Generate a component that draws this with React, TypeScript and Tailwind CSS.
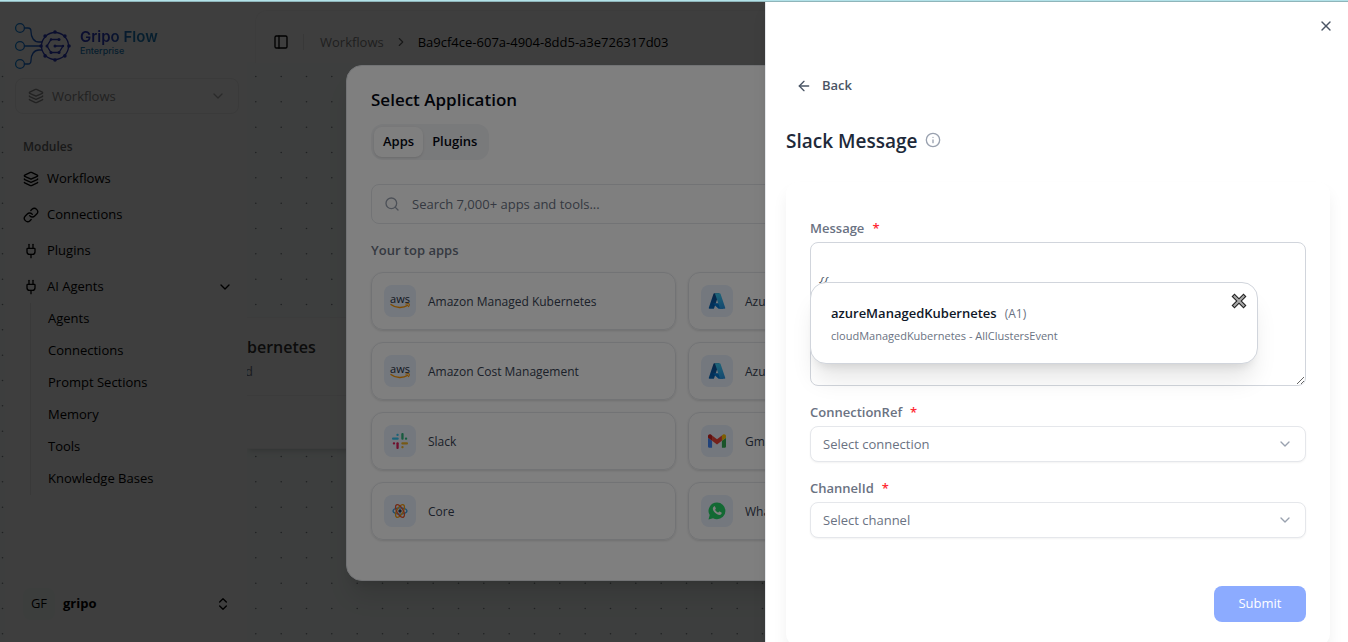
import React from 'react';
import {
  ArrowLeft,
  ChevronDown,
  ChevronRight,
  ChevronsUpDown,
  Info,
  Layers,
  Link,
  PanelLeft,
  Plug,
  Search,
  X,
} from 'lucide-react';

function BrandMark() {
  const ring = [0, 45, 90, 135, 180, 225, 270, 315].map((deg) => {
    const a = (deg * Math.PI) / 180;
    return [41 + 14 * Math.cos(a), 24 + 14 * Math.sin(a)];
  });
  return (
    <svg viewBox="0 0 58 48" className="h-12 w-[58px]" fill="none" strokeWidth="1.3" aria-hidden="true">
      <defs>
        <linearGradient id="brand" gradientUnits="userSpaceOnUse" x1="0" y1="0" x2="36" y2="0">
          <stop offset="0" stopColor="#0a8ae0" />
          <stop offset="1" stopColor="#2a38b8" />
        </linearGradient>
      </defs>
      <g stroke="url(#brand)">
        <circle cx="6" cy="6" r="4.400" />
        <circle cx="6" cy="24" r="4.400" />
        <circle cx="6" cy="42" r="4.400" />
        <path d="M10.500 6h3.500c2 0 3 1 3 3.500c0 6 3 10.500 8 10.500h3M10.500 24.010h16M10.500 42h3.500c2 0 3-1 3-3.500c0-6 3-10.500 8-10.500h3" />
      </g>
      <g stroke="#2a38b8">
        <circle cx="41" cy="24" r="13.500" />
        <path d="M45 17.500h-8l-4 6.500l4 6.500h8l4-6.500h-8" />
      </g>
      <g fill="#2a38b8">
        {ring.map(([x, y], i) => (
          <circle key={i} cx={x} cy={y} r="1.800" />
        ))}
        <circle cx="45" cy="17.500" r="1.500" />
        <circle cx="37" cy="17.500" r="1.200" />
        <circle cx="33" cy="24" r="1.500" />
        <circle cx="37" cy="30.500" r="1.500" />
        <circle cx="45" cy="30.500" r="1.500" />
        <circle cx="41" cy="24" r="1.500" />
        <circle cx="49" cy="24" r="1.200" />
      </g>
    </svg>
  );
}

function AwsIcon() {
  return (
    <span className="flex flex-col items-center">
      <span className="text-[11px] leading-[9px] font-medium text-[#252f3e]">aws</span>
      <svg viewBox="0 0 20 6" className="h-[6px] w-5" fill="none" stroke="#ff9900" strokeWidth="1.400" aria-hidden="true">
        <path d="M0.500 1.200c5.500 4.300 12.500 4.300 17.500 1" />
        <path d="M15.500 1.200c2-.7 3.500-.5 3.700-.1c.2.5-.2 1.900-1 2.900" strokeWidth="1.100" />
      </svg>
    </span>
  );
}

function AzureIcon() {
  return (
    <svg viewBox="0 0 96 96" className="size-[18px]" aria-hidden="true">
      <defs>
        <linearGradient id="azLeft" x1="0.600" y1="0" x2="0.200" y2="1">
          <stop offset="0" stopColor="#114a8b" />
          <stop offset="1" stopColor="#0669bc" />
        </linearGradient>
        <linearGradient id="azRight" x1="0.300" y1="0" x2="0.700" y2="1">
          <stop offset="0" stopColor="#3ccbf4" />
          <stop offset="1" stopColor="#2892df" />
        </linearGradient>
      </defs>
      <path fill="url(#azLeft)" d="M33.300 6.500h26.100L32.400 86.600a4.200 4.200 0 0 1-3.900 2.900H8.200a4.200 4.200 0 0 1-3.900-5.500L29.400 9.400a4.200 4.200 0 0 1 3.900-2.900z" />
      <path fill="#0078d4" d="M71.200 60.300H29.900a1.900 1.900 0 0 0-1.300 3.300l26.500 24.800a4.200 4.200 0 0 0 2.900 1.100h23.400z" />
      <path fill="url(#azRight)" d="M66.600 9.400a4.200 4.200 0 0 0-3.900-2.900H33.600a4.200 4.200 0 0 1 3.900 2.900l25.200 74.700a4.200 4.200 0 0 1-4 5.500h29.100a4.200 4.200 0 0 0 4-5.500z" />
    </svg>
  );
}

function SlackIcon() {
  return (
    <svg viewBox="0 0 16 16" className="size-4" aria-hidden="true">
      <g fill="#36c5f0">
        <rect x="0" y="4.500" width="6.700" height="2.200" rx="1" />
        <rect x="4.400" y="0.800" width="2.300" height="2.300" rx="1" />
      </g>
      <g fill="#2eb67d">
        <rect x="9.300" y="0" width="2.300" height="6.700" rx="1" />
        <rect x="12.900" y="4.400" width="2.300" height="2.300" rx="1" />
      </g>
      <g fill="#ecb22e">
        <rect x="9.300" y="9.300" width="6.700" height="2.300" rx="1" />
        <rect x="9.300" y="12.900" width="2.300" height="2.300" rx="1" />
      </g>
      <g fill="#e01e5a">
        <rect x="4.400" y="9.300" width="2.300" height="6.700" rx="1" />
        <rect x="0.800" y="9.300" width="2.300" height="2.300" rx="1" />
      </g>
    </svg>
  );
}

function GmailIcon() {
  return (
    <svg viewBox="52 42 88 66" className="h-[14px] w-[18px]" aria-hidden="true">
      <path fill="#4285f4" d="M58 108h14V74L52 59v43c0 3.320 2.690 6 6 6" />
      <path fill="#34a853" d="M120 108h14c3.320 0 6-2.690 6-6V59l-20 15" />
      <path fill="#fbbc04" d="M120 48v26l20-15v-8c0-7.420-8.470-11.650-14.400-7.200" />
      <path fill="#ea4335" d="M72 74V48l24 18 24-18v26L96 92" />
      <path fill="#c5221f" d="M52 51v8l20 15V48l-5.600-4.200c-5.940-4.450-14.400-.22-14.400 7.200" />
    </svg>
  );
}

function CoreIcon() {
  return (
    <svg viewBox="0 0 16 16" className="size-4" fill="none" strokeWidth="1.300" aria-hidden="true">
      <ellipse cx="8" cy="8" rx="7" ry="3.200" stroke="#3498db" />
      <ellipse cx="8" cy="8" rx="7" ry="3.200" stroke="#f39c12" transform="rotate(120 8 8)" />
      <ellipse cx="8" cy="8" rx="7" ry="3.200" stroke="#e8562a" transform="rotate(60 8 8)" />
      <circle cx="8" cy="8" r="1.700" fill="#2c3e50" />
    </svg>
  );
}

function WhatsAppIcon() {
  return (
    <svg viewBox="0 0 18 18" className="size-[18px]" aria-hidden="true">
      <path fill="#25d366" d="M9 0.500a8.400 8.400 0 0 1 0 16.800a8.400 8.400 0 0 1-4-1L0.500 17.500l1.200-4.400A8.400 8.400 0 0 1 9 0.500z" />
      <path
        fill="#fff"
        d="M5.900 4.600c.4-.4 1-.3 1.200.1l.7 1.600c.1.300 0 .5-.2.800l-.5.600c.7 1.300 1.800 2.300 3.200 2.900l.8-.9c.2-.2.400-.2.600-.1l1.700.8c.3.100.4.300.3.700c-.1 1.200-1.100 1.900-2.200 1.900c-2.900 0-6.700-3.600-6.700-6.400c0-.8.500-1.500 1.100-2z"
      />
    </svg>
  );
}

const modules = [
  { label: 'Workflows', Icon: Layers },
  { label: 'Connections', Icon: Link },
  { label: 'Plugins', Icon: Plug },
];

const agentPages = ['Agents', 'Connections', 'Prompt Sections', 'Memory', 'Tools', 'Knowledge Bases'];

const apps = [
  { name: 'Amazon Managed Kubernetes', Icon: AwsIcon },
  { name: 'Azure Managed Kubernetes', Icon: AzureIcon },
  { name: 'Amazon Cost Management', Icon: AwsIcon },
  { name: 'Azure Cost Management', Icon: AzureIcon },
  { name: 'Slack', Icon: SlackIcon },
  { name: 'Gmail', Icon: GmailIcon },
  { name: 'Core', Icon: CoreIcon },
  { name: 'WhatsApp', Icon: WhatsAppIcon },
];

function Canvas() {
  return (
    <div className="absolute inset-x-0 top-[60px] bottom-0 overflow-hidden bg-[#f4fbf9]">
      <svg className="size-full" aria-hidden="true">
        <defs>
          <pattern id="dots" width="76" height="76" patternUnits="userSpaceOnUse">
            {[2.500, 27.800, 53.200].map((x) =>
              [14.500, 39.800, 65.200].map((y) => <circle key={`${x}-${y}`} cx={x} cy={y} r="0.800" fill="#81848a" />),
            )}
          </pattern>
        </defs>
        <rect width="100%" height="100%" fill="url(#dots)" />
      </svg>
      <div className="absolute top-[255px] left-[247px] h-[132px] w-60 rounded-r-lg border border-l-0 border-[#f0f0f0] bg-[#f9faf9] shadow-md">
        <div className="h-[78px] border-b border-[#eeeeee] pt-[15px]">
          <p className="text-base leading-7 font-semibold text-[#333]">bernetes</p>
          <p className="-ml-0.5 text-[13px] leading-5 text-gray-500">d</p>
        </div>
      </div>
    </div>
  );
}

function Sidebar() {
  return (
    <aside className="relative ml-[5px] flex w-[242px] shrink-0 flex-col bg-[#f9f9f9] pr-2 pl-2.5">
      <div className="-ml-px flex h-[76px] items-center gap-2 pt-3">
        <BrandMark />
        <div className="pb-1.5">
          <p className="bg-linear-to-r from-[#2b38bc] from-35% to-[#1a78b8] to-65% bg-clip-text font-[Inter] text-[15px] leading-4 font-semibold text-transparent">
            Gripo Flow
          </p>
          <p className="font-[Inter] text-[9px] leading-3 font-medium text-[#1a78b8]">Enterprise</p>
        </div>
      </div>
      <button className="flex h-9 shrink-0 items-center gap-2 rounded-lg border border-[#e8e8e8] px-3 text-[13px] text-[#888]">
        <Layers className="size-4" />
        <span className="flex-1 pt-px text-left">Workflows</span>
        <ChevronDown className="size-4 opacity-70" />
      </button>
      <nav className="pt-[21px] pl-2">
        <h2 className="h-[26px] text-xs leading-6 font-semibold text-[#666]">Modules</h2>
        <ul className="text-[13px] text-black">
          {modules.map(({ label, Icon }) => (
            <li key={label}>
              <a href="#" className="flex h-9 items-center gap-2">
                <Icon className="size-4" />
                {label}
              </a>
            </li>
          ))}
          <li>
            <button className="flex h-9 w-full items-center gap-2 pr-1.5">
              <Plug className="size-4" />
              <span className="flex-1 text-left">AI Agents</span>
              <ChevronDown className="size-4" />
            </button>
            <ul className="-mt-0.5 ml-[7px] border-l border-[#e4e4e4] pl-[17px]">
              {agentPages.map((page) => (
                <li key={page}>
                  <a href="#" className="flex h-8 items-center">
                    {page}
                  </a>
                </li>
              ))}
            </ul>
          </li>
        </ul>
      </nav>
      <button className="mt-auto mb-[22px] ml-2 flex h-8 items-center gap-2 pr-2 text-[13px] text-black">
        <span className="flex size-8 items-center justify-center rounded-lg bg-[#f1f9f6]">GF</span>
        <span className="flex-1 text-left font-bold">gripo</span>
        <ChevronsUpDown className="size-4" />
      </button>
    </aside>
  );
}

function Header() {
  return (
    <header className="relative ml-2 h-[61px] flex-1 pt-2">
      <div className="flex h-[53px] items-center rounded-tl-xl border-t border-l border-[#f2f2f2] bg-[#fbfbfb] pt-2.5 pl-[17px]">
        <button aria-label="Toggle sidebar">
          <PanelLeft className="size-4" />
        </button>
        <nav aria-label="Breadcrumb" className="ml-3.5 flex items-center border-l border-[#e0e0e0] pl-4 text-[13px] leading-4">
          <a href="#" className="text-[#808080]">
            Workflows
          </a>
          <ChevronRight className="mx-2.5 size-3.5 text-[#606060]" />
          <span className="text-black">Ba9cf4ce-607a-4904-8dd5-a3e726317d03</span>
        </nav>
      </div>
    </header>
  );
}

function AppPicker() {
  return (
    <section className="w-2xl rounded-2xl border border-gray-200 bg-white px-6 pt-5 pb-10 shadow-xl">
      <h2 className="text-[17px] leading-7 font-semibold text-gray-950">Select Application</h2>
      <div className="mt-2.5 inline-flex h-9 items-center rounded-xl bg-gray-100 p-[3px] text-[13px] font-semibold text-gray-950">
        <button className="h-full rounded-lg bg-white px-[9px] shadow-sm">Apps</button>
        <button className="h-full rounded-lg px-[9px]">Plugins</button>
      </div>
      <div className="mt-6 flex h-10 items-center gap-3 rounded-lg border border-gray-200 px-3">
        <Search className="size-4 text-gray-400" />
        <input
          aria-label="Search apps and tools"
          placeholder="Search 7,000+ apps and tools..."
          className="flex-1 pt-0.5 text-[13px] outline-none placeholder:text-gray-500"
        />
      </div>
      <h3 className="mt-4 text-[13px] leading-5 font-semibold text-gray-500">Your top apps</h3>
      <div className="mt-3 grid grid-cols-2 gap-3">
        {apps.map(({ name, Icon }) => (
          <button key={name} className="flex h-[58px] items-center gap-3 rounded-xl border border-gray-200 px-3 shadow-sm">
            <span className="flex size-8 items-center justify-center rounded-lg bg-[#e8f0fc]">
              <Icon />
            </span>
            <span className="pt-0.5 text-xs font-medium text-gray-700">{name}</span>
          </button>
        ))}
      </div>
    </section>
  );
}

function FieldLabel({ id, children }: { id: string; children: React.ReactNode }) {
  return (
    <label htmlFor={id} className="block text-[13px] leading-5 font-semibold text-gray-500">
      {children}
      <span className="ml-2 text-[#ff2a35]">*</span>
    </label>
  );
}

function SelectField({ id, label, placeholder }: { id: string; label: string; placeholder: string }) {
  return (
    <div className="mt-4">
      <FieldLabel id={id}>{label}</FieldLabel>
      <div className="relative mt-1">
        <select
          id={id}
          className="block h-9 w-full appearance-none rounded-lg border border-gray-200 bg-white px-3 pt-0.5 text-[13px] text-gray-500 shadow-xs"
        >
          <option>{placeholder}</option>
        </select>
        <ChevronDown className="pointer-events-none absolute top-2.5 right-[13px] size-4 text-gray-400" />
      </div>
    </div>
  );
}

function SuggestionPopup() {
  return (
    <div className="absolute top-10 left-0 h-[82px] w-[448px] rounded-2xl border border-gray-300 bg-white px-5 pt-5 shadow-xl">
      <p className="flex items-baseline gap-2 text-[13px] leading-5 font-semibold text-gray-900">
        azureManagedKubernetes
        <span className="text-xs font-normal text-gray-500">(A1)</span>
      </p>
      <p className="mt-1 text-[11px] leading-[18px] text-gray-500">cloudManagedKubernetes - AllClustersEvent</p>
      <button aria-label="Close suggestions" className="absolute top-2.5 right-2.5">
        <svg viewBox="0 0 16 16" className="size-4" strokeLinecap="square" aria-hidden="true">
          <path d="M3.500 3.500l9 9M12.500 3.500l-9 9" stroke="#222" strokeWidth="4.200" />
          <path d="M3.500 3.500l9 9M12.500 3.500l-9 9" stroke="#aaa" strokeWidth="2" />
        </svg>
      </button>
    </div>
  );
}

function MessageDrawer() {
  return (
    <section className="absolute inset-y-0 right-0 w-[583px] max-w-full overflow-hidden border-l border-gray-200 bg-white px-5 shadow-lg">
      <div className="-mr-1.5 flex h-12 items-center justify-end">
        <button aria-label="Close" className="text-gray-600">
          <X className="size-4" />
        </button>
      </div>
      <button className="mt-6 ml-2.5 flex h-6 items-center gap-2.5 text-[13px] font-semibold text-gray-600">
        <ArrowLeft className="size-4" />
        Back
      </button>
      <div className="mt-7 flex h-7 items-center gap-2">
        <h1 className="pt-0.5 text-[19px] font-semibold text-gray-800">Slack Message</h1>
        <Info className="size-4 text-gray-400" />
      </div>
      <form className="mt-7 -mr-0.5 rounded-xl bg-white px-6 pt-9 pb-6 shadow-[0_10px_15px_rgba(0,0,0,0.06)]">
        <FieldLabel id="message">Message</FieldLabel>
        <div className="relative mt-1">
          <textarea
            id="message"
            defaultValue={'\n{{'}
            className="block h-36 w-full rounded-lg border border-gray-300 px-2 pt-2 text-[13px] leading-5 text-gray-600 italic"
          />
          <SuggestionPopup />
        </div>
        <SelectField id="connection" label="ConnectionRef" placeholder="Select connection" />
        <SelectField id="channel" label="ChannelId" placeholder="Select channel" />
        <div className="mt-12 flex justify-end">
          <button type="button" className="h-9 min-w-[92px] rounded-lg bg-[#8cabff] px-6 text-[13px] font-medium text-white">
            Submit
          </button>
        </div>
      </form>
    </section>
  );
}

export default function App() {
  return (
    <div className="flex h-screen flex-col font-['Open_Sans',sans-serif]">
      <div className="h-0.5 border-b border-[#8fb5ba] bg-[#b2e2e9]" />
      <div className="relative flex flex-1 overflow-hidden bg-[#f9f9f9]">
        <Canvas />
        <Sidebar />
        <Header />
        <div className="absolute inset-0 flex items-center justify-center bg-black/50 pt-0.5 pl-4">
          <AppPicker />
        </div>
        <div className="absolute inset-0 bg-black/50">
          <MessageDrawer />
        </div>
      </div>
    </div>
  );
}
